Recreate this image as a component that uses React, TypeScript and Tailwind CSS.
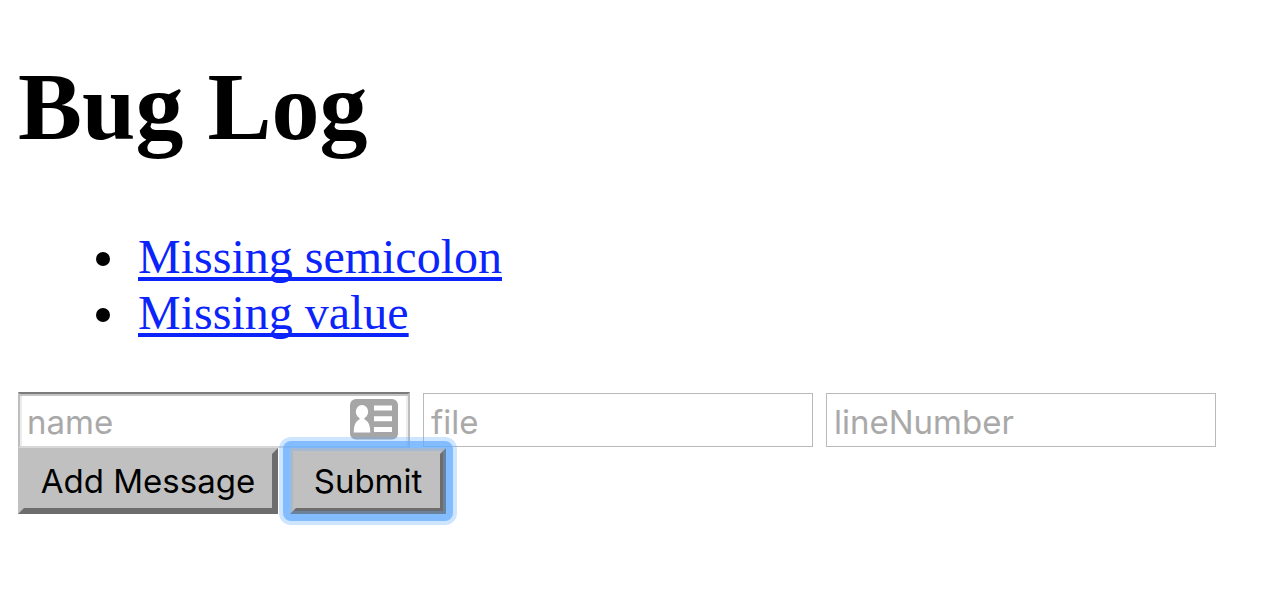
import React from "react";

const bugs = ["Missing semicolon", "Missing value"];

const plainField =
  "h-[54px] w-[390px] border border-[#bababa] bg-white px-[7px] pt-1 font-[Inter,'Liberation_Sans',sans-serif] text-[33px] text-black placeholder:text-[#a9a9a9] outline-none";

const button =
  "h-[66px] border-6 border-t-[#c0c0c0] border-l-[#c0c0c0] border-r-[#6d6d6d] border-b-[#6d6d6d] bg-[#c0c0c0] pt-px font-[Inter,'Liberation_Sans',sans-serif] text-[33px] leading-none whitespace-nowrap text-black outline-none";

const focusRing =
  "before:absolute before:-inset-[13px] before:rounded-lg before:border-[7px] before:border-[#64adff]/70 after:absolute after:-inset-[17px] after:rounded-xl after:border-[14px] after:border-[#64adff]/32";

function ContactCardIcon() {
  return (
    <svg viewBox="0 0 48 41" className="pointer-events-none h-[41px] w-12" aria-hidden="true">
      <rect width="48" height="40.500" rx="6" fill="#a6a6a6" />
      <ellipse cx="12" cy="12.800" rx="6.200" ry="6.800" fill="#fff" />
      <path d="M9.500 18h5v2.500c4 1.500 5.800 6 5.800 13H3.800c0-7 1.700-11.500 5.700-13z" fill="#fff" />
      <path d="M24 6.500h18v5H24zM24 17.200h18v5H24zM24 28h18v5H24z" fill="#fff" />
    </svg>
  );
}

export default function App() {
  return (
    <main className="min-h-screen bg-white px-[18px] pt-[52px] font-['Liberation_Serif',serif] text-black">
      <h1 className="text-[96px] leading-[110px] font-bold">Bug Log</h1>
      <ul className="mt-[67px] list-none pl-[78px] text-[48px] leading-[56px]">
        {bugs.map((bug) => (
          <li key={bug} className="flex items-center">
            <span className="mt-1 mr-[28px] size-3.5 rounded-full bg-black" aria-hidden="true" />
            <a
              href="#"
              className="text-[#0b24fb] underline decoration-4 underline-offset-4 [text-decoration-skip-ink:none]"
            >
              {bug}
            </a>
          </li>
        ))}
      </ul>
      <form className="mt-[51px]" onSubmit={(e) => e.preventDefault()}>
        <div className="flex flex-wrap items-center gap-x-[13px]">
          <div className="relative">
            <input
              aria-label="name"
              placeholder="name"
              className="block h-14 w-[392px] border-2 border-t-[#7b7b7b] border-r-[#bdbdbd] border-b-[#d8d8d8] border-l-[#bdbdbd] bg-white px-[7px] pt-1 font-[Inter,'Liberation_Sans',sans-serif] text-[33px] text-black shadow-[inset_0_2px_0_#c4c4c4,inset_2px_0_0_#ececec,inset_-2px_0_0_#ececec] outline-none placeholder:text-[#a9a9a9]"
            />
            <span className="absolute top-[7px] right-3">
              <ContactCardIcon />
            </span>
          </div>
          <input aria-label="file" placeholder="file" className={plainField} />
          <input aria-label="lineNumber" placeholder="lineNumber" className={plainField} />
        </div>
        <div className="flex gap-3">
          <button type="button" className={`${button} w-[260px]`}>
            Add Message
          </button>
          <button type="submit" className={`${button} ${focusRing} relative w-[156px]`}>
            Submit
          </button>
        </div>
      </form>
    </main>
  );
}
